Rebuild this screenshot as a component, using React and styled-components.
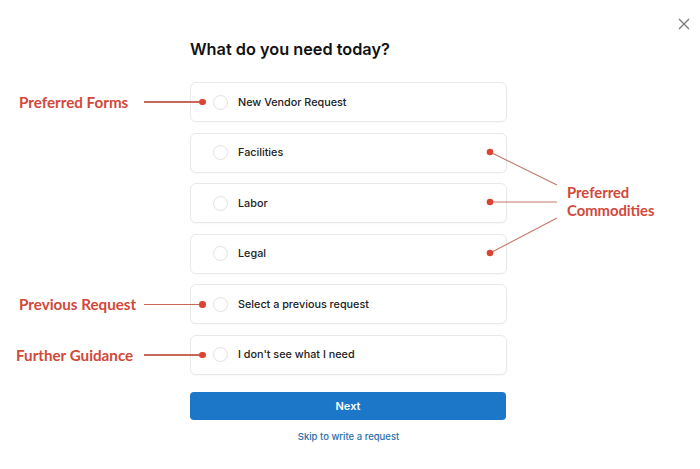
import styled, { createGlobalStyle } from 'styled-components';

const GlobalStyle = createGlobalStyle`
  html, body {
    margin: 0;
    padding: 0;
    background: #fff;
  }
  body {
    font-family: Inter, "Open Sans", sans-serif;
    color: #1a1a1a;
  }
`;

const OPTIONS_TOP = [{ label: 'New Vendor Request', callout: 'Preferred Forms' }];
const COMMODITIES = ['Facilities', 'Labor', 'Legal'];
const OPTIONS_BOTTOM = [
  { label: 'Select a previous request', callout: 'Previous Request' },
  { label: "I don't see what I need", callout: 'Further Guidance', shift: -3 },
];

function Option({ label, callout, shift = 0 }) {
  return (
    <Card>
      {callout && (
        <Callout>
          <CalloutLabel $shift={shift}>{callout}</CalloutLabel>
          <CalloutLine />
          <Dot />
        </Callout>
      )}
      <Radio />
      <OptionText>{label}</OptionText>
    </Card>
  );
}

export default function App() {
  return (
    <>
      <GlobalStyle />
      <Page>
        <CloseButton aria-label="Close">
          <svg width="12" height="12" viewBox="0 0 12 12">
            <path d="M1 1 L11 11 M11 1 L1 11" stroke="#7a7a7a" strokeWidth="1.3" fill="none" />
          </svg>
        </CloseButton>
        <Column>
          <Title>What do you need today?</Title>
          <List>
            {OPTIONS_TOP.map((o) => (
              <Option key={o.label} {...o} />
            ))}
            <Group>
              {COMMODITIES.map((c) => (
                <Option key={c} label={c} />
              ))}
              <CommodityLines width="90" height="141" viewBox="0 0 90 141">
                <g stroke="#c27b6b" strokeWidth="1.2" fill="none">
                  <path d="M10 19 L77 52" />
                  <path d="M10 69 L77 69" />
                  <path d="M10 120 L77 85" />
                </g>
                <g fill="#dc4431">
                  <circle cx="10" cy="19" r="3.3" />
                  <circle cx="10" cy="69" r="3.3" />
                  <circle cx="10" cy="120" r="3.3" />
                </g>
              </CommodityLines>
              <CommodityLabel>
                Preferred
                <br />
                Commodities
              </CommodityLabel>
            </Group>
            {OPTIONS_BOTTOM.map((o) => (
              <Option key={o.label} {...o} />
            ))}
          </List>
          <NextButton>Next</NextButton>
          <SkipLink href="#">Skip to write a request</SkipLink>
        </Column>
      </Page>
    </>
  );
}

const Page = styled.div`
  position: relative;
  width: 700px;
  height: 469px;
  background: #fff;
  overflow: hidden;
`;

const CloseButton = styled.button`
  position: absolute;
  top: 18px;
  right: 10px;
  width: 12px;
  height: 12px;
  padding: 0;
  border: none;
  background: none;
  display: flex;
  cursor: pointer;
`;

const Column = styled.div`
  width: 317px;
  margin-left: 190px;
  padding-top: 39px;
  display: flex;
  flex-direction: column;
`;

const Title = styled.h1`
  margin: 0 0 23px 0;
  font-size: 16.3px;
  line-height: 20px;
  font-weight: 600;
  color: #111;
`;

const List = styled.div`
  display: flex;
  flex-direction: column;
  gap: 10.6px;
`;

const Group = styled.div`
  position: relative;
  display: flex;
  flex-direction: column;
  gap: 10.6px;
`;

const Card = styled.div`
  position: relative;
  height: 40px;
  box-sizing: border-box;
  border: 1px solid #e9e9e9;
  border-radius: 6px;
  background: #fff;
  box-shadow: 0 1px 2px rgba(0, 0, 0, 0.03);
  display: flex;
  align-items: center;
  padding-left: 22px;
  gap: 10px;
`;

const Radio = styled.span`
  width: 15px;
  height: 15px;
  box-sizing: border-box;
  border: 1px solid #e2e2e2;
  border-radius: 50%;
  flex-shrink: 0;
`;

const OptionText = styled.span`
  font-size: 10.8px;
  font-weight: 500;
  color: #222;
`;

const Callout = styled.div`
  position: absolute;
  left: -172px;
  right: 300px;
  top: 50%;
  transform: translateY(-50%);
  display: flex;
  align-items: center;
`;

const CalloutLabel = styled.span`
  width: 125px;
  flex-shrink: 0;
  margin-left: ${(p) => p.$shift}px;
  padding-right: ${(p) => -p.$shift}px;
  font-family: Lato, "Open Sans", sans-serif;
  font-weight: 700;
  font-size: 15.2px;
  color: #d2483a;
  white-space: nowrap;
`;

const CalloutLine = styled.span`
  flex: 1;
  height: 1.2px;
  background: #c9685a;
`;

const Dot = styled.span`
  width: 6.6px;
  height: 6.6px;
  border-radius: 50%;
  background: #dc4431;
  flex-shrink: 0;
`;

const CommodityLines = styled.svg`
  position: absolute;
  left: 290px;
  top: 0;
  overflow: visible;
`;

const CommodityLabel = styled.div`
  position: absolute;
  left: 377px;
  top: 50px;
  font-family: Lato, "Open Sans", sans-serif;
  font-weight: 700;
  font-size: 14.8px;
  line-height: 18px;
  color: #d2483a;
  white-space: nowrap;
`;

const NextButton = styled.button`
  margin-top: 17px;
  height: 28px;
  width: 316px;
  border: none;
  border-radius: 4px;
  background: #1c77c9;
  color: #fff;
  font-family: Inter, sans-serif;
  font-size: 11px;
  font-weight: 600;
  cursor: pointer;
`;

const SkipLink = styled.a`
  margin-top: 11px;
  align-self: center;
  font-size: 9.5px;
  font-weight: 500;
  color: #2a6ea8;
  text-decoration: none;
`;
